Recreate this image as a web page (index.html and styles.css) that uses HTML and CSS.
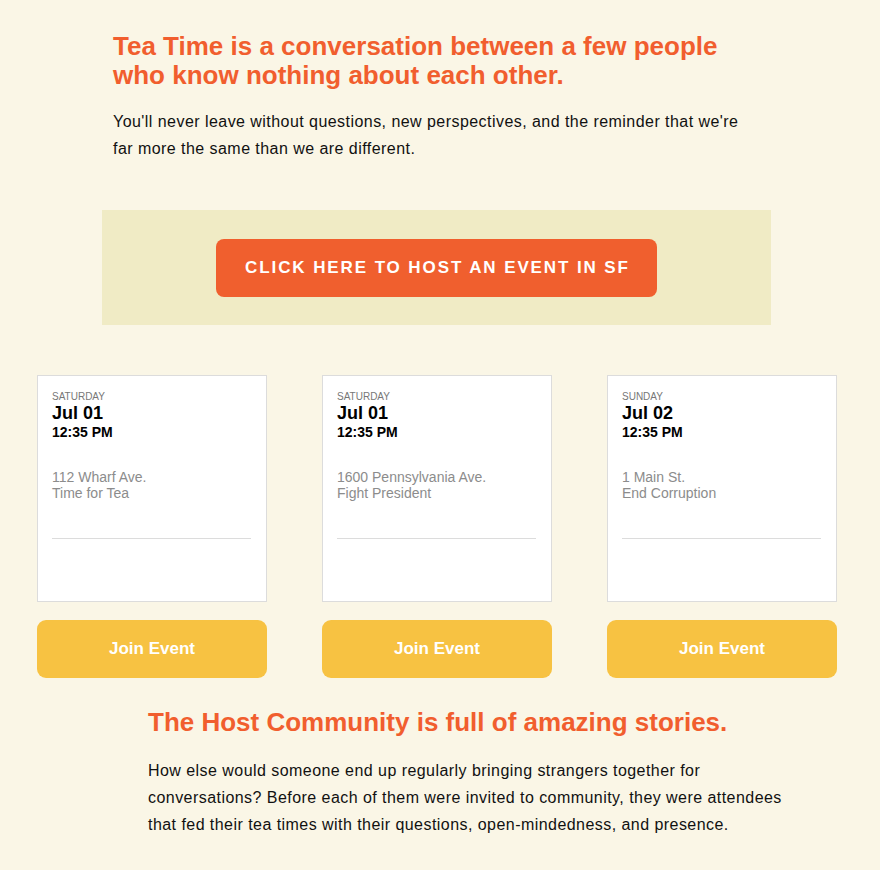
FILE: index.html
```html
<!DOCTYPE html>
<html>
<head>
<meta charset="utf-8">
<link rel="stylesheet" href="styles.css">
</head>
<body>
<div class="page">
  <section class="intro">
    <h1 class="title">Tea Time is a conversation between a few people who know nothing about each other.</h1>
    <p class="lead">You'll never leave without questions, new perspectives, and the reminder that we're far more the same than we are different.</p>
  </section>
  <div class="banner">
    <a class="host-btn">CLICK HERE TO HOST AN EVENT IN SF</a>
  </div>
  <div class="events">
    <div class="event">
      <div class="card">
        <div class="day">SATURDAY</div>
        <div class="date">Jul 01</div>
        <div class="time">12:35 PM</div>
        <div class="addr">112 Wharf Ave.<br>Time for Tea</div>
        <div class="rule"></div>
      </div>
      <a class="join">Join Event</a>
    </div>
    <div class="event">
      <div class="card">
        <div class="day">SATURDAY</div>
        <div class="date">Jul 01</div>
        <div class="time">12:35 PM</div>
        <div class="addr">1600 Pennsylvania Ave.<br>Fight President</div>
        <div class="rule"></div>
      </div>
      <a class="join">Join Event</a>
    </div>
    <div class="event">
      <div class="card">
        <div class="day">SUNDAY</div>
        <div class="date">Jul 02</div>
        <div class="time">12:35 PM</div>
        <div class="addr">1 Main St.<br>End Corruption</div>
        <div class="rule"></div>
      </div>
      <a class="join">Join Event</a>
    </div>
  </div>
  <section class="community">
    <h2 class="title">The Host Community is full of amazing stories.</h2>
    <p class="lead">How else would someone end up regularly bringing strangers together for conversations? Before each of them were invited to community, they were attendees that fed their tea times with their questions, open-mindedness, and presence.</p>
  </section>
</div>
</body>
</html>
```
FILE: styles.css
```css
html, body {
  margin: 0;
  padding: 0;
  background: #faf6e6;
}
body {
  font-family: "Liberation Sans", Arial, sans-serif;
  color: #111;
}
.page {
  width: 880px;
  padding-top: 32px;
}
.intro {
  margin-left: 113px;
  width: 640px;
}
.title {
  margin: 0;
  color: #f15e2e;
  font-size: 26px;
  line-height: 29px;
  font-weight: bold;
}
.lead {
  margin: 18px 0 0;
  font-size: 16px;
  line-height: 27px;
}
.intro .lead {
  letter-spacing: 0.45px;
}
.banner {
  margin: 48px 0 0 102px;
  width: 669px;
  height: 115px;
  background: #f0ebc5;
  display: flex;
  align-items: center;
  justify-content: center;
}
.host-btn {
  display: flex;
  align-items: center;
  justify-content: center;
  width: 441px;
  height: 58px;
  background: #f05f2e;
  border-radius: 8px;
  color: #fff;
  font-size: 17px;
  font-weight: bold;
  letter-spacing: 1.9px;
  text-indent: 2px;
}
.events {
  display: flex;
  gap: 55px;
  margin: 50px 0 0 37px;
}
.event {
  width: 230px;
  display: flex;
  flex-direction: column;
  gap: 18px;
}
.card {
  height: 227px;
  box-sizing: border-box;
  background: #fff;
  border: 1px solid #dcdcdc;
  padding: 15px 15px 0 14px;
}
.day {
  font-size: 10px;
  line-height: 12px;
  color: #777;
}
.date {
  font-size: 18px;
  line-height: 20px;
  font-weight: bold;
  color: #000;
}
.time {
  font-size: 14px;
  line-height: 18px;
  font-weight: bold;
  color: #000;
}
.addr {
  margin-top: 28px;
  font-size: 14px;
  line-height: 16px;
  color: #8c8c8c;
}
.rule {
  margin-top: 37px;
  border-top: 1px solid #dcdcdc;
}
.join {
  display: flex;
  align-items: center;
  justify-content: center;
  height: 58px;
  background: #f7c242;
  border-radius: 9px;
  color: #fff;
  font-size: 17px;
  font-weight: bold;
}
.community {
  margin: 30px 0 0 148px;
  width: 645px;
}
.community .lead {
  margin-top: 20px;
  letter-spacing: 0.45px;
}
```
